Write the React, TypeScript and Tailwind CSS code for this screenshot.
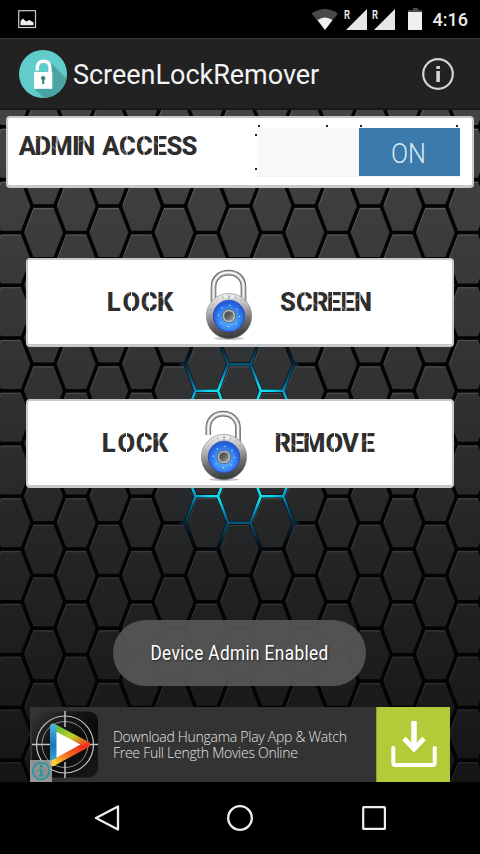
import React from "react";

const COL = 65.3;
const ROW = 52.78;

type Hex = { x: number; y: number };

const hexes: Hex[] = [];
for (let c = -1; c < 16; c++) {
  const odd = c % 2 !== 0;
  const x = 43.5 + (c * COL) / 2;
  for (let r = -3; r < 13; r++) {
    hexes.push({ x, y: 232.4 + r * ROW + (odd ? ROW / 2 : 0) });
  }
}

const outline = ({ x, y }: Hex) =>
  `M${x - 11.3} ${y - 26.4}H${x + 11.3}L${x + 21.4} ${y}L${x + 11.3} ${y + 26.4}H${x - 11.3}L${x - 21.4} ${y}Z`;

const highlight = ({ x, y }: Hex) =>
  `M${x - 18.6} ${y - 1}L${x - 10} ${y - 23.8}H${x + 10}`;

const mesh = hexes.map(outline).join("");
const shine = hexes.map(highlight).join("");

function HexBackground() {
  return (
    <svg className="absolute inset-0 h-full w-full" viewBox="0 0 480 854" aria-hidden="true">
      <defs>
        <linearGradient id="steel" gradientUnits="userSpaceOnUse" x1="0" y1="110" x2="0" y2="782">
          <stop offset="0" stopColor="#434446" />
          <stop offset="0.2" stopColor="#3a3b3d" />
          <stop offset="0.42" stopColor="#303133" />
          <stop offset="0.62" stopColor="#252627" />
          <stop offset="1" stopColor="#141515" />
        </linearGradient>
        <linearGradient id="shine" gradientUnits="userSpaceOnUse" x1="0" y1="110" x2="0" y2="782">
          <stop offset="0" stopColor="#66676a" />
          <stop offset="0.5" stopColor="#444547" />
          <stop offset="1" stopColor="#262727" />
        </linearGradient>
        <radialGradient id="glow" gradientUnits="userSpaceOnUse" cx="239.4" cy="443.7" r="112">
          <stop offset="0" stopColor="#10e0f0" />
          <stop offset="0.54" stopColor="#0fdcec" />
          <stop offset="0.62" stopColor="#0a8fc4" />
          <stop offset="0.7" stopColor="#07587a" />
          <stop offset="0.82" stopColor="#064a66" stopOpacity="0.8" />
          <stop offset="0.9" stopColor="#053850" stopOpacity="0.45" />
          <stop offset="1" stopColor="#032532" stopOpacity="0" />
        </radialGradient>
        <clipPath id="glowArea">
          <rect x="180" y="340" width="119" height="210" />
        </clipPath>
      </defs>
      <rect width="480" height="854" fill="url(#steel)" />
      <path d={shine} fill="none" stroke="url(#shine)" strokeWidth="1.1" />
      <path d={mesh} fill="none" stroke="#030303" strokeWidth="3.5" />
      <path d={mesh} fill="none" stroke="url(#glow)" strokeWidth="2.6" clipPath="url(#glowArea)" />
    </svg>
  );
}

type StencilProps = {
  text: string;
  xs: number[];
  cuts: number[];
  width: number;
};

function Stencil({ text, xs, cuts, width }: StencilProps) {
  const scratches = cuts
    .map((x, i) => {
      const y = 11 + ((i * 7) % 11);
      return `M${x - 5} ${y}l${4 + (i % 3)} ${i % 2 ? 5 : -3}`;
    })
    .join("");
  return (
    <svg className="block shrink-0 overflow-visible" width={width} height="36" viewBox={`0 0 ${width} 36`}>
      <text x={xs.join(" ")} y="26.5" fill="#2e2e2e" fontFamily="Roboto, sans-serif" fontWeight="800" fontSize="25.6">
        {text}
      </text>
      <path d={cuts.map((x) => `M${x} 6V30`).join("")} stroke="#fff" strokeWidth="1" />
      <path d={scratches} stroke="#c9c9c9" strokeWidth="0.6" />
    </svg>
  );
}

function Padlock({ open = false, id }: { open?: boolean; id: string }) {
  const shackle = open
    ? "M8.300 26V19C8.300 10 15 4.600 23 4.600S38 10 38 19V35"
    : "M8.500 34V19C8.500 10 15 4.600 23.500 4.600S38.500 10 38.500 19V34";
  return (
    <svg className="block shrink-0" width="48" height="74" viewBox="0 0 48 74">
      <defs>
        <linearGradient id={`${id}-body`} x1="0" y1="0" x2="0.15" y2="1">
          <stop offset="0" stopColor="#f8f8f8" />
          <stop offset="0.4" stopColor="#b6b6b6" />
          <stop offset="0.7" stopColor="#6d6d6d" />
          <stop offset="1" stopColor="#3c3f3d" />
        </linearGradient>
        <radialGradient id={`${id}-dial`} cy="0.6">
          <stop offset="0" stopColor="#6cc0ff" />
          <stop offset="0.65" stopColor="#3989f2" />
          <stop offset="1" stopColor="#2560dc" />
        </radialGradient>
        <linearGradient id={`${id}-knob`} x1="0" y1="0" x2="1" y2="1">
          <stop offset="0" stopColor="#444" />
          <stop offset="0.5" stopColor="#606460" />
          <stop offset="1" stopColor="#aaa" />
        </linearGradient>
      </defs>
      <ellipse cx="24" cy="70.500" rx="15" ry="1.500" fill="#c4c4c4" />
      <path d={shackle} fill="none" stroke="#5c5c5c" strokeWidth="5.600" />
      <path d={shackle} fill="none" stroke="#a6a6a6" strokeWidth="4.200" />
      <path d={shackle} fill="none" stroke="#f5f5f5" strokeWidth="2" />
      <circle cx="24" cy="48" r="22.700" fill={`url(#${id}-body)`} stroke="#777" strokeWidth="0.500" />
      <path d="M17 27.500L18 31H30L31 27.500" fill="#eee" stroke="#aaa" strokeWidth="0.500" />
      <path d="M24 27.500V30.500" stroke="#2aa4dd" strokeWidth="1" />
      <circle cx="24" cy="48" r="19.600" fill="none" stroke="#777" strokeWidth="0.700" strokeDasharray="1 5.100" />
      <circle cx="24" cy="48" r="15.800" fill={`url(#${id}-dial)`} stroke="#2a44b8" strokeWidth="0.800" />
      <circle cx="24" cy="48" r="10.600" fill="none" stroke="#c8e6ff" strokeWidth="1.100" strokeDasharray="1.200 7.120" />
      <circle cx="24" cy="48" r="6.800" fill="#b9bcbc" stroke="#3d5875" strokeWidth="0.800" />
      <circle cx="24" cy="48" r="4.800" fill={`url(#${id}-knob)`} />
    </svg>
  );
}

function StatusBar() {
  return (
    <div className="flex h-[38px] shrink-0 items-center justify-between bg-black pr-[12px] pl-[18px]">
      <svg width="19" height="19" viewBox="0 0 19 19">
        <rect x="0.700" y="0.700" width="16.800" height="16.800" fill="none" stroke="#ccc" strokeWidth="1.200" />
        <path d="M2.500 15.200V11L5 8.500L8 11.500L11.500 10L15.500 12.500V15.200Z" fill="#eee" />
      </svg>
      <div className="flex items-center">
        <svg className="overflow-visible" width="112" height="24" viewBox="0 0 112 24">
          <path d="M-0.500 6.500Q13 -2.500 26 6.500L13 23Z" fill="#484848" />
          <path d="M5.500 13Q13 8 20.500 13L13 23Z" fill="#f0f0f0" />
          <path d="M34 23L55 2V23ZM62 23L83 2V23Z" fill="#e6e6e6" />
          <path d="M101 1h5v2h4v2h-14V3h5z" fill="#4a4a4a" />
          <rect x="96" y="5" width="14" height="18" fill="#efefef" />
          <text x="32" y="11.500" fill="#eee" fontFamily="Roboto, sans-serif" fontWeight="600" fontSize="12" textLength="6" lengthAdjust="spacingAndGlyphs">R</text>
          <text x="60" y="11.500" fill="#eee" fontFamily="Roboto, sans-serif" fontWeight="600" fontSize="12" textLength="6" lengthAdjust="spacingAndGlyphs">R</text>
        </svg>
        <span className="ml-[9px] pt-[2px] font-['Roboto',sans-serif] text-[18px] leading-6 font-medium text-[#eee]">4:16</span>
      </div>
    </div>
  );
}

function AppBar() {
  return (
    <header className="flex h-[72px] shrink-0 items-center border-t border-b-2 border-t-[#343434] border-b-[#181818] bg-[#222] pr-[25px] pl-[19px]">
      <svg width="48" height="48" viewBox="0 0 48 48">
        <defs>
          <clipPath id="logo">
            <circle cx="24" cy="24" r="24" />
          </clipPath>
        </defs>
        <g clipPath="url(#logo)">
          <rect width="48" height="48" fill="#60cdca" />
          <path d="M32 13L54 35V54H31L15 38.500L32 34Z" fill="#4aa5a2" />
        </g>
        <path d="M18.200 20.500Q17.500 11.200 24.800 11.200Q31 11.500 31 18V23" fill="none" stroke="#fff" strokeWidth="3.300" />
        <rect x="15" y="22" width="18.300" height="16.800" fill="#fff" />
        <path d="M24.200 26a2.100 2.100 0 0 1 1 4V34h-2V30a2.100 2.100 0 0 1 1-4Z" fill="#367f7d" />
      </svg>
      <h1 className="ml-[6px] flex-1 pt-[2px] font-['Roboto',sans-serif] text-[27px] leading-8 font-normal tracking-[-0.02px] text-[#f3f3f3]">ScreenLockRemover</h1>
      <svg width="34" height="34" viewBox="0 0 34 34">
        <circle cx="17" cy="17" r="14.800" fill="none" stroke="#d4d4d4" strokeWidth="2.200" />
        <path d="M15.300 9h3.600v3h-3.600zM15.300 14h3.600v11h-3.600z" fill="#d4d4d4" />
      </svg>
    </header>
  );
}

function AdminCard() {
  return (
    <section className="relative mx-[6px] mt-[6px] flex h-[72px] items-start rounded-[4px] border-2 border-b-[3px] border-[#c9c9c9] bg-white pt-[10px] pl-[11px]">
      <Stencil
        text="ADMIN ACCESS"
        width={184}
        xs={[-0.3, 15.500, 31.300, 53, 58.300, 82, 83.200, 99.900, 116.900, 133.500, 147.500, 162.500]}
        cuts={[22, 38, 65, 108, 125, 139.500]}
      />
      <div className="ml-[54px] flex h-[49px] w-[203px] border-b border-[#f2f2f2]">
        <div className="w-[102px] bg-[#f8f8f8]" />
        <div className="flex w-[101px] items-center justify-center bg-[#3b7aaa] font-['Roboto',sans-serif] text-[28px] leading-none font-light text-[#dce9f3]">
          <span className="mr-[3px] inline-block scale-x-[0.9] pt-[3px]">ON</span>
        </div>
      </div>
      <svg className="absolute top-[7px] left-[246px]" width="208" height="46" viewBox="0 0 208 46" aria-hidden="true">
        <path d="M4 0h2v2h-2zM72 0h2v2h-2zM106 0h2v2h-2zM202 0h2v2h-2zM1 9h2v2h-2zM1 43h2v2h-2z" fill="#222" />
      </svg>
    </section>
  );
}

function DownloadIcon() {
  return (
    <svg width="48" height="50" viewBox="0 0 48 50">
      <path d="M24 1V30" stroke="#fff" strokeWidth="5.500" />
      <path d="M14 18.500L24 29L34 18.500" fill="none" stroke="#fff" strokeWidth="4.800" />
      <path d="M3.300 28V43Q3.300 45 5.300 45H42.700Q44.700 45 44.700 43V28" fill="none" stroke="#fff" strokeWidth="4" strokeLinecap="round" />
    </svg>
  );
}

function AdBanner() {
  return (
    <a className="relative mx-[30px] flex h-[75px] items-center bg-[#333]">
      <svg className="ml-[1px]" width="68" height="68" viewBox="0 0 68 68">
        <defs>
          <linearGradient id="tile" x1="0" y1="0" x2="1" y2="1">
            <stop offset="0" stopColor="#383838" />
            <stop offset="0.350" stopColor="#151515" />
            <stop offset="0.600" stopColor="#0b0b0b" />
            <stop offset="1" stopColor="#191919" />
          </linearGradient>
          <linearGradient id="blueSide" x1="0" y1="0" x2="0" y2="1">
            <stop offset="0" stopColor="#49b7e7" />
            <stop offset="0.500" stopColor="#1478bd" />
            <stop offset="1" stopColor="#46b0d2" />
          </linearGradient>
          <linearGradient id="greenSide" x1="0" y1="0" x2="1" y2="1">
            <stop offset="0" stopColor="#58b83c" />
            <stop offset="0.550" stopColor="#b9d329" />
            <stop offset="1" stopColor="#f03920" />
          </linearGradient>
          <linearGradient id="redSide" x1="0" y1="1" x2="1" y2="0">
            <stop offset="0" stopColor="#ffd12d" />
            <stop offset="0.450" stopColor="#f36a1f" />
            <stop offset="1" stopColor="#e72020" />
          </linearGradient>
        </defs>
        <rect x="1" y="0.500" width="66" height="66" rx="9" fill="url(#tile)" />
        <circle cx="34" cy="33.500" r="28.500" fill="none" stroke="#c5c5c5" strokeWidth="1.200" />
        <circle cx="34" cy="33.500" r="23" fill="none" stroke="#9b9b9b" strokeWidth="0.900" />
        <path d="M34 0V16M34 51V67M1 33.500H19M56 33.500H67" stroke="#c2c2c2" strokeWidth="1.500" />
        <path d="M22 15V52L50 33.500Z" fill="#fff" />
        <path d="M22 52L56 33.500" stroke="url(#redSide)" strokeWidth="6" strokeLinecap="round" />
        <path d="M22 15.500L56 33.500" stroke="url(#greenSide)" strokeWidth="6" strokeLinecap="round" />
        <path d="M19 15.500Q22 11 25.500 15V50L21 54.500Q19 54 19 51Z" fill="url(#blueSide)" />
        <path d="M19 50L25.500 47V53Q21 57 19 53Z" fill="#ffd12d" />
      </svg>
      <p className="ml-[14px] w-[264px] shrink-0 pt-[1px] font-['Open_Sans',sans-serif] text-[14px] leading-4 font-light tracking-[-0.27px] whitespace-nowrap text-[#e2e2e2]">
        Download Hungama Play App &amp; Watch
        <br />
        Free Full Length Movies Online
      </p>
      <div className="absolute top-0 right-0 flex h-[75px] w-[74px] items-center justify-center border-l border-[#8c9f31] bg-[#b2cc39]">
        <DownloadIcon />
      </div>
      <svg className="absolute bottom-0 left-0" width="22" height="22" viewBox="0 0 22 22">
        <rect width="22" height="22" fill="#b4b4b4" fillOpacity="0.780" />
        <circle cx="11" cy="11" r="8.300" fill="none" stroke="#2496a6" strokeWidth="1.700" />
        <path d="M10 5h2.400v2.400H10zM8.800 9h3.500v6h1.400v1.500H8.600V15h1.500v-4.600H8.800z" fill="#2496a6" />
      </svg>
    </a>
  );
}

function NavBar() {
  return (
    <nav className="flex h-[72px] shrink-0 items-center justify-between bg-black px-[92px]">
      <svg width="30" height="30" viewBox="0 0 30 30">
        <path d="M26 3.500V26.500L4 15Z" fill="none" stroke="#eee" strokeWidth="2.300" strokeLinejoin="round" />
      </svg>
      <svg width="30" height="30" viewBox="0 0 30 30">
        <circle cx="15" cy="15" r="11.800" fill="none" stroke="#eee" strokeWidth="2.300" />
      </svg>
      <svg width="30" height="30" viewBox="0 0 30 30">
        <rect x="5.200" y="4.200" width="21.700" height="21.700" rx="0.500" fill="none" stroke="#eee" strokeWidth="2.200" />
      </svg>
    </nav>
  );
}

export default function App() {
  return (
    <div className="relative h-[854px] w-[480px] overflow-hidden bg-black">
      <HexBackground />
      <div className="relative flex h-full flex-col">
        <StatusBar />
        <AppBar />
        <main className="flex flex-1 flex-col">
          <AdminCard />
          <button className="mx-[26px] mt-[70px] flex h-[89px] items-start rounded-[4px] border-2 border-b-[3px] border-[#c9c9c9] bg-white pl-[79px]">
            <span className="pt-[24px]">
              <Stencil text="LOCK" width={68} xs={[-0.3, 15.500, 33.800, 50]} cuts={[24.500, 42.500, 57]} />
            </span>
            <span className="ml-[30px] pt-[8px]">
              <Padlock id="closed" />
            </span>
            <span className="ml-[27px] pt-[24px]">
              <Stencil text="SCREEN" width={94} xs={[0, 16, 32, 46.800, 60.400, 74]} cuts={[25, 38, 52.500, 66, 80]} />
            </span>
          </button>
          <button className="mx-[26px] mt-[52px] flex h-[89px] items-start rounded-[4px] border-2 border-b-[3px] border-[#c9c9c9] bg-white pl-[74px]">
            <span className="pt-[24px]">
              <Stencil text="LOCK" width={68} xs={[-0.300, 15.500, 33.800, 50]} cuts={[24.500, 42.500, 57]} />
            </span>
            <span className="ml-[30px] pt-[8px]">
              <Padlock id="opened" open />
            </span>
            <span className="ml-[27px] pt-[24px]">
              <Stencil text="REMOVE" width={104} xs={[-0.500, 15, 28, 50.500, 67, 85.500]} cuts={[6, 21, 34.500, 59.500, 92]} />
            </span>
          </button>
          <div className="mt-auto">
            <AdBanner />
          </div>
        </main>
        <NavBar />
      </div>
      <div className="absolute top-[620px] left-[113px] flex h-[66px] w-[253px] items-center justify-center rounded-full bg-[#565656]/93">
        <span className="inline-block scale-x-[0.86] pl-[1px] pb-[1px] font-['Roboto',sans-serif] text-[20px] leading-6 tracking-[0.45px] whitespace-nowrap text-white [text-shadow:1px_1px_2px_#222]">
          Device Admin Enabled
        </span>
      </div>
    </div>
  );
}
